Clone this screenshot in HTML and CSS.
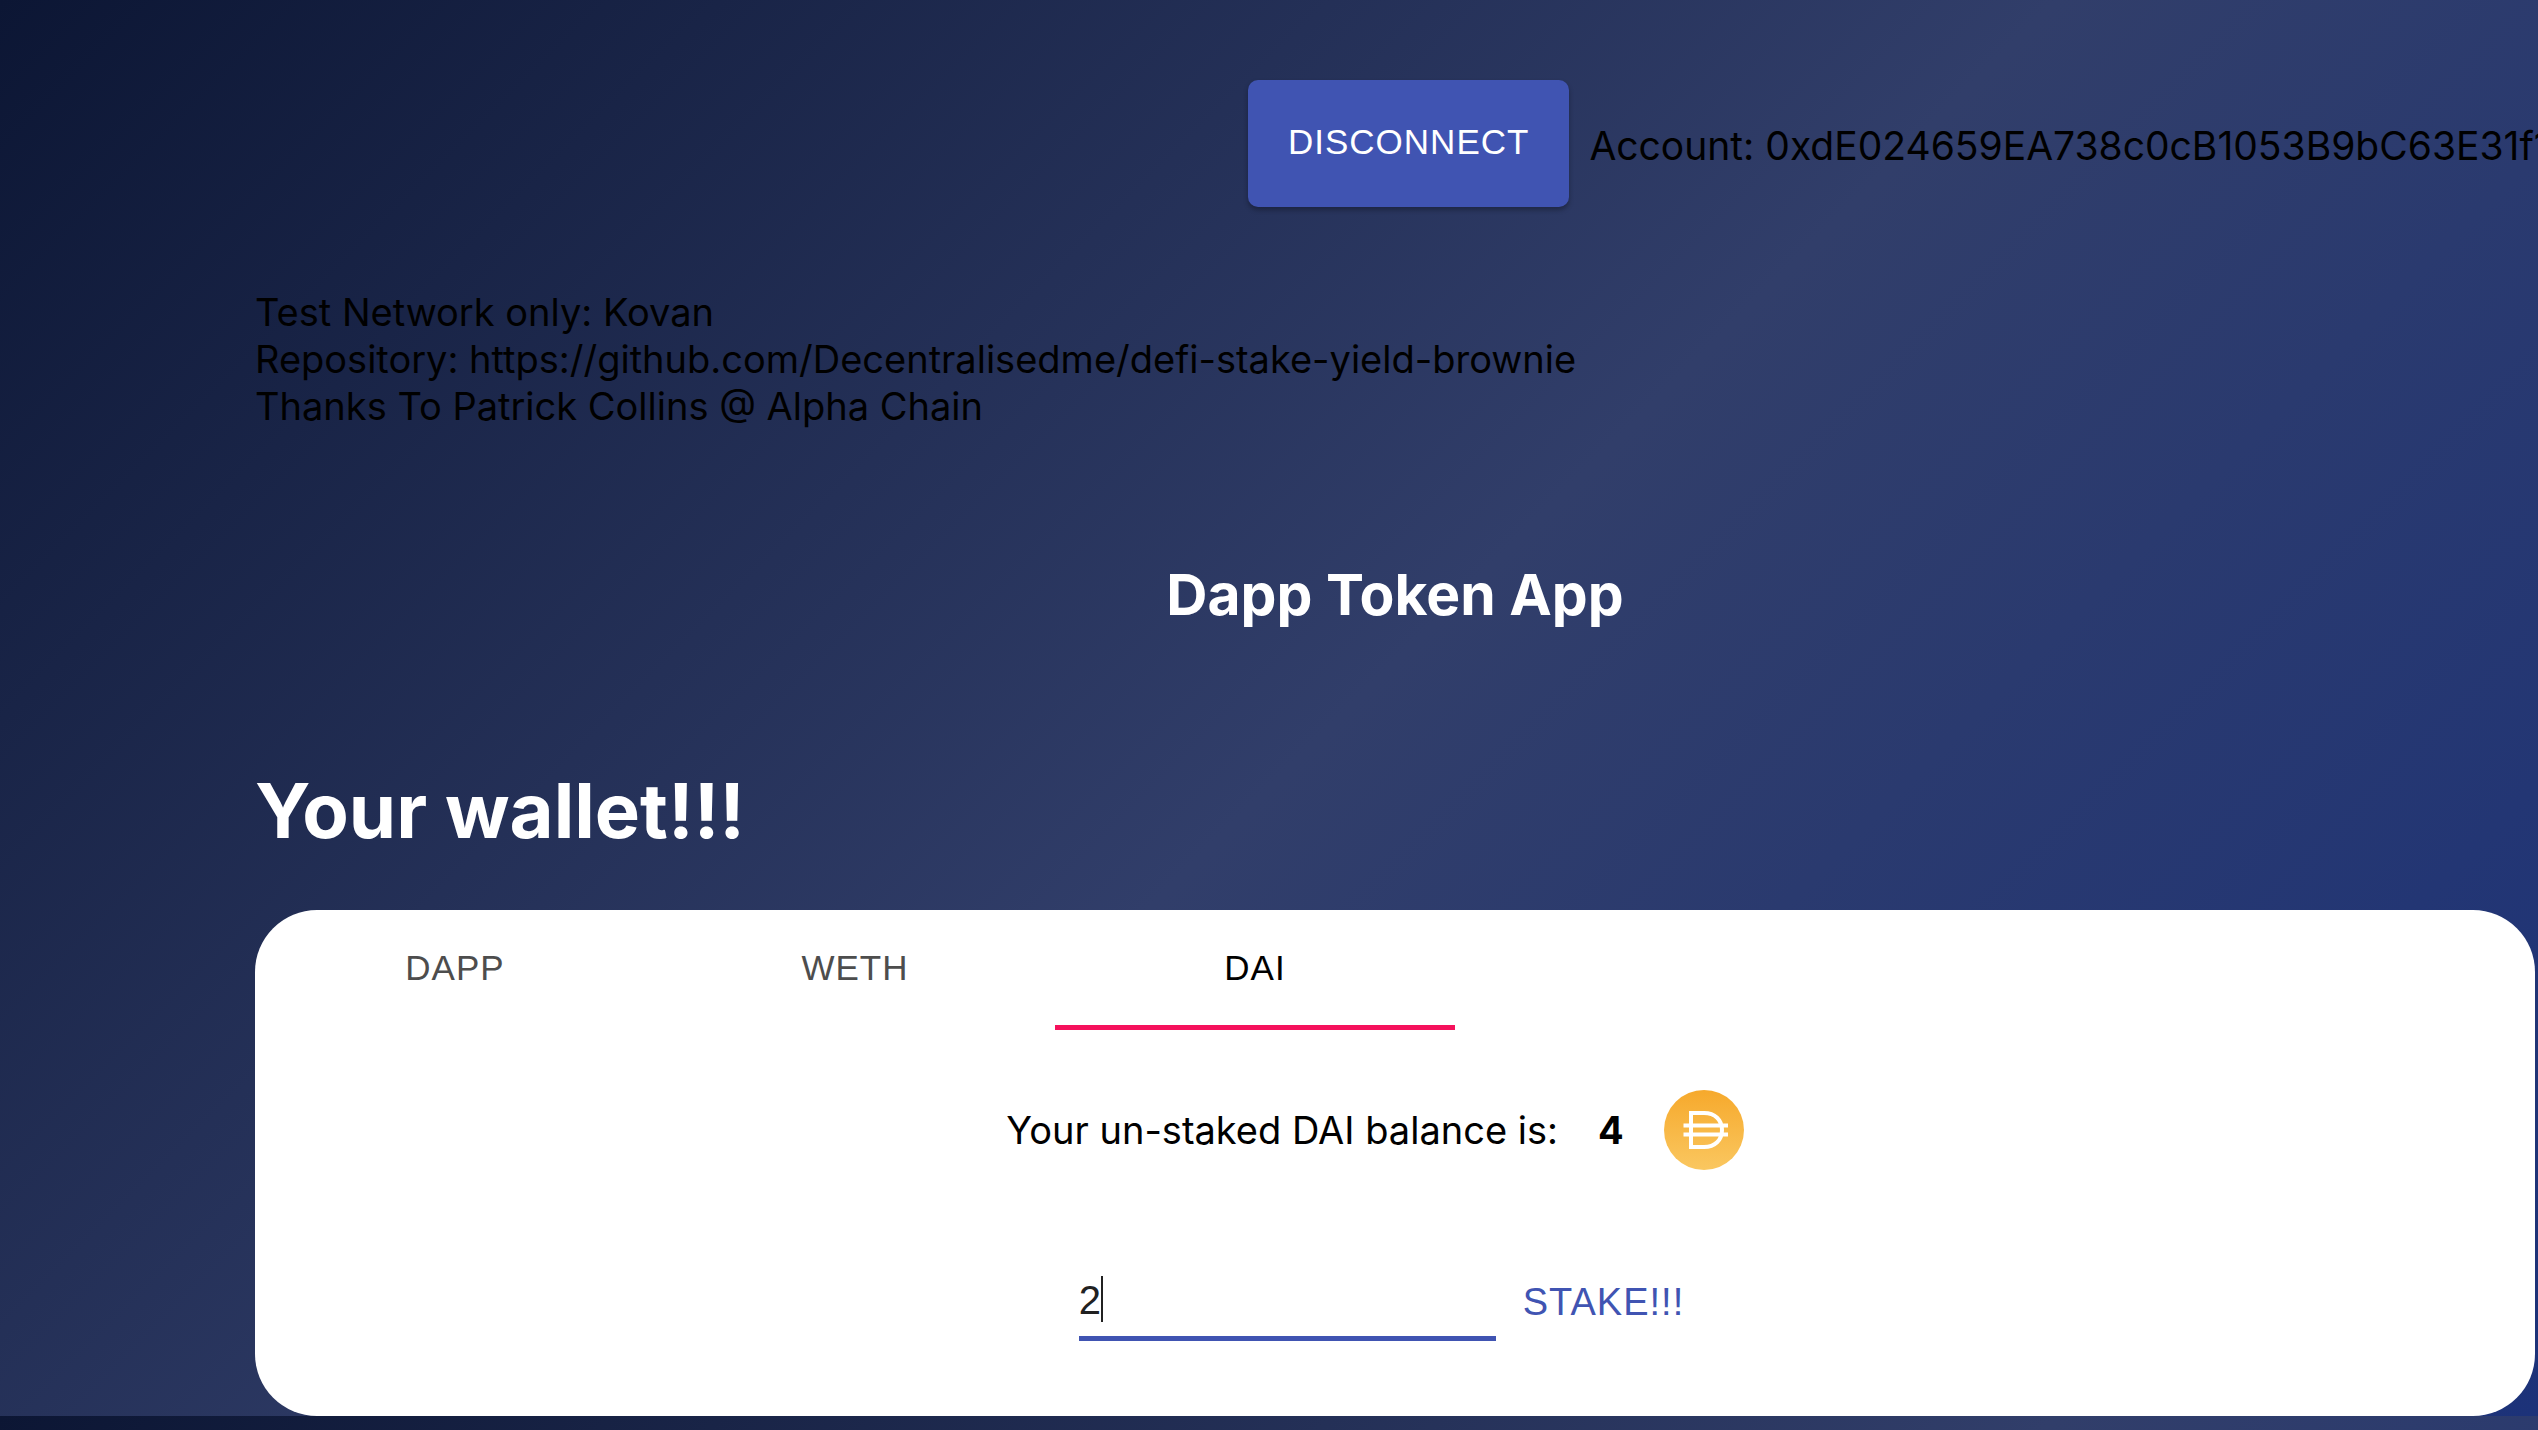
FILE: index.html
```html
<!DOCTYPE html>
<html lang="en">
<head>
<meta charset="utf-8">
<meta name="viewport" content="width=device-width, initial-scale=1">
<title>Dapp Token App</title>
<link rel="stylesheet" href="styles.css">
</head>
<body>
<div class="page">
  <header class="header">
    <button class="button-contained" type="button">DISCONNECT</button>
    <span class="account">Account: 0xdE024659EA738c0cB1053B9bC63E31f1</span>
  </header>
  <main class="main">
    <p class="info">Test Network only: Kovan<br>Repository: https://github.com/Decentralisedme/defi-stake-yield-brownie<br>Thanks To Patrick Collins @ Alpha Chain</p>
    <h2 class="title">Dapp Token App</h2>
    <h1 class="wallet-title">Your wallet!!!</h1>
    <section class="card">
      <div class="tabs" role="tablist">
        <button class="tab" type="button" role="tab" aria-selected="false">DAPP</button>
        <button class="tab" type="button" role="tab" aria-selected="false">WETH</button>
        <button class="tab tab-selected" type="button" role="tab" aria-selected="true">DAI</button>
      </div>
      <div class="panel" role="tabpanel">
        <div class="balance">
          <span>Your un-staked DAI balance is:</span>
          <strong class="amount">4</strong>
          <svg class="coin" viewBox="0 0 80 80" aria-hidden="true">
            <defs>
              <linearGradient id="coin-fill" x1="0" y1="0" x2="0" y2="1">
                <stop offset="0" stop-color="#f6a92c"/>
                <stop offset="1" stop-color="#fac760"/>
              </linearGradient>
            </defs>
            <circle cx="40" cy="40" r="40" fill="url(#coin-fill)"/>
            <path d="M27 23H40C51 23 58 30 58 40S51 57 40 57H27ZM19.500 35.500H64M19.500 44.500H64" fill="none" stroke="#fff" stroke-width="4"/>
          </svg>
        </div>
        <form class="stake">
          <div class="field">
            <input class="field-input" type="text" value="2" aria-label="Amount to stake">
            <span class="caret"></span>
          </div>
          <button class="button-text" type="button">STAKE!!!</button>
        </form>
      </div>
    </section>
  </main>
</div>
</body>
</html>
```
FILE: styles.css
```css
* {
  box-sizing: border-box;
}

html {
  background: linear-gradient(135deg, #0c1634 0%, #313e6a 52%, #1c3279 100%);
}

body {
  margin: 0;
  overflow-x: hidden;
  color: #000;
  font-family: Inter, "Liberation Sans", sans-serif;
  font-size: 38px;
  line-height: 47px;
}

button,
input {
  border: 0;
  margin: 0;
  background: none;
  font-family: "Liberation Sans", Arial, sans-serif;
}

.header {
  display: flex;
  align-items: center;
  gap: 20px;
  padding: 80px 0 0 1248px;
  white-space: nowrap;
}

.account {
  padding-top: 3px;
  font-size: 39px;
}

.button-contained {
  flex: none;
  padding: 30px 40px 34px;
  border-radius: 10px;
  background: #4054b2;
  box-shadow: 0 3px 5px rgba(0, 0, 0, 0.3);
  color: #fff;
  font-size: 35px;
  line-height: 63px;
  letter-spacing: 1px;
}

.main {
  padding: 82px 3px 0 255px;
}

.info,
.title,
.wallet-title {
  margin: 0;
}

.title {
  padding-top: 129px;
  color: #fff;
  font-size: 57px;
  line-height: 72px;
  text-align: center;
}

.wallet-title {
  padding: 131px 0 52px;
  color: #fff;
  font-size: 76px;
  line-height: 96px;
}

.card {
  border-radius: 62px;
  background: #fff;
}

.tabs {
  display: flex;
}

.tab {
  width: 400px;
  height: 120px;
  padding: 0;
  border-bottom: 5px solid transparent;
  color: #4d4d4d;
  font-size: 35px;
  letter-spacing: 1px;
}

.tab-selected {
  border-bottom-color: #f5115c;
  color: #000;
}

.panel {
  padding: 60px 60px 72px;
}

.balance {
  display: flex;
  align-items: center;
  justify-content: center;
  gap: 40px;
}

.coin {
  width: 80px;
  height: 80px;
  margin-right: 40px;
}

.stake {
  display: flex;
  align-items: flex-start;
  justify-content: center;
  padding-top: 78px;
}

.field {
  position: relative;
  width: 417px;
  padding-top: 16px;
  border-bottom: 5px solid #4054b2;
}

.field-input {
  display: block;
  width: 100%;
  height: 72px;
  padding: 0;
  outline: 0;
  color: #212121;
  font-size: 40px;
}

.caret {
  position: absolute;
  left: 22px;
  bottom: 14px;
  width: 2px;
  height: 46px;
  background: #212121;
}

.button-text {
  padding: 22px 27px 10px;
  color: #4054b2;
  font-size: 38px;
  line-height: 64px;
  letter-spacing: 1px;
}
```
